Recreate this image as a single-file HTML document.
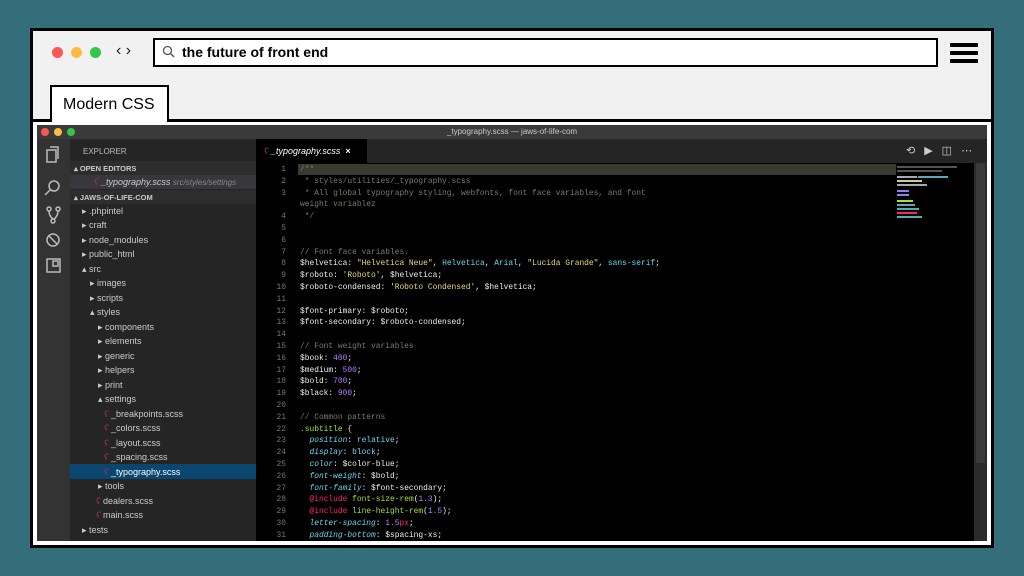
<!DOCTYPE html>
<html><head><style>
*{margin:0;padding:0;box-sizing:border-box}
body{width:1024px;height:576px;background:#346e7b;position:relative;overflow:hidden;font-family:"Liberation Sans",sans-serif}
.frame{position:absolute;left:30px;top:28px;width:964px;height:520px;background:#fff;border:3px solid #000}
.hdr{position:absolute;left:0;top:0;width:958px;height:91px;background:#f1f1f1;border-bottom:3px solid #000}
.dot{position:absolute;top:16px;width:11px;height:11px;border-radius:50%}
.url{position:absolute;left:120px;top:7px;width:785px;height:29px;border:2.5px solid #000;background:#fff;font-weight:bold;font-size:14px;line-height:24px;padding-left:27px}
.tab{position:absolute;left:17px;top:54px;width:119px;height:37px;border:2.5px solid #000;border-bottom:none;background:#fff;font-size:16px;padding:9px 0 0 11px}
.burger{position:absolute;left:917px;top:12px;width:28px;height:20px}
.burger i{display:block;height:3.5px;background:#000;margin-bottom:4.5px}
.vs{position:absolute;left:4px;top:94px;width:950px;height:416px;background:#000;overflow:hidden}
.title{position:absolute;left:0;top:0;width:950px;height:14px;background:#3a3a3a;color:#ccc;font-size:8px;text-align:center;line-height:14px}
.act{position:absolute;left:0;top:14px;width:33px;height:402px;background:#333}
.side{position:absolute;left:33px;top:14px;width:186px;height:402px;background:#252526;color:#ccc;font-size:9px}
.side div{position:absolute;white-space:nowrap}
.tb{position:absolute;left:219px;top:14px;width:731px;height:24px;background:#252526}
.ed{position:absolute;left:219px;top:38px;width:731px;height:378px;background:#000}
.code{position:absolute;left:0;top:0;font-family:"Liberation Mono",monospace;font-size:7.9px;line-height:11.8px;color:#eee;white-space:pre}
.ln{position:absolute;left:0;width:30px;text-align:right;color:#777}
.c{color:#7a7a6a}.y{color:#e6db74}.b{color:#66d9ef}.p{color:#ae81ff}.g{color:#a6e22e}.r{color:#f92672}.i{color:#66d9ef;font-style:italic}
.s{color:#b0304f;font-style:italic}
.mm{position:absolute;height:2px}
</style></head><body>
<div class="frame">
 <div class="hdr">
  <div class="dot" style="left:19px;background:#fc5753"></div>
  <div class="dot" style="left:38px;background:#fdbc40"></div>
  <div class="dot" style="left:57px;background:#33c748"></div>
  <div style="position:absolute;left:83px;top:11px;font-size:16px;color:#222">‹ ›</div>
  <div class="url"><svg style="position:absolute;left:7px;top:5px" width="13" height="13"><circle cx="5.5" cy="5.5" r="4" fill="none" stroke="#555" stroke-width="1.3"/><line x1="8.5" y1="8.5" x2="12" y2="12" stroke="#555" stroke-width="1.5"/></svg>the future of front end</div>
  <div class="burger"><i></i><i></i><i></i></div>
  <div class="tab">Modern CSS</div>
 </div>
 <div class="vs">
  <div class="title"><span style="position:absolute;left:4px;top:3px;width:8px;height:8px;border-radius:50%;background:#fc5753"></span><span style="position:absolute;left:17px;top:3px;width:8px;height:8px;border-radius:50%;background:#fdbc40"></span><span style="position:absolute;left:30px;top:3px;width:8px;height:8px;border-radius:50%;background:#33c748"></span>_typography.scss — jaws-of-life-com</div>
  <div class="act">
   <svg width="33" height="180" fill="none" stroke="#bbb" stroke-width="1.5">
    <rect x="10" y="11" width="9" height="12"/><path d="M13 8h8v12"/>
    <circle cx="17" cy="47" r="5"/><path d="M13 51l-5 5"/>
    <circle cx="12" cy="70" r="2"/><circle cx="21" cy="70" r="2"/><circle cx="16" cy="82" r="2"/><path d="M12 72q0 5 4 8M21 72q0 5-4 8"/>
    <circle cx="16" cy="101" r="6"/><path d="M12 97l8 8"/>
    <rect x="10" y="120" width="13" height="13"/><rect x="16" y="122" width="5" height="5"/>
   </svg>
  </div>
  <div class="side">
   <div style="left:13px;top:8px;font-size:8px;color:#bbb">EXPLORER</div>
   <div style="left:0;top:22px;width:186px;height:14px;background:#2d2d2d"></div>
   <div style="left:4px;top:25px;font-size:7.5px;font-weight:bold">▴ OPEN EDITORS</div>
   <div style="left:0;top:36px;width:186px;height:14px;background:#37373d"></div>
   <div style="left:24px;top:38px"><span class="s">ʕ</span> <i>_typography.scss</i> <span style="color:#888;font-size:8px"><i>src/styles/settings</i></span></div>
   <div style="left:0;top:51px;width:186px;height:14px;background:#2d2d2d"></div>
   <div style="left:4px;top:54px;font-size:7.5px;font-weight:bold">▴ JAWS-OF-LIFE-COM</div>
   <div style="left:12px;top:67px">▸ .phpintel</div>
   <div style="left:12px;top:81px">▸ craft</div>
   <div style="left:12px;top:96px">▸ node_modules</div>
   <div style="left:12px;top:110px">▸ public_html</div>
   <div style="left:12px;top:125px">▴ src</div>
   <div style="left:20px;top:139px">▸ images</div>
   <div style="left:20px;top:154px">▸ scripts</div>
   <div style="left:20px;top:168px">▴ styles</div>
   <div style="left:28px;top:183px">▸ components</div>
   <div style="left:28px;top:197px">▸ elements</div>
   <div style="left:28px;top:212px">▸ generic</div>
   <div style="left:28px;top:226px">▸ helpers</div>
   <div style="left:28px;top:241px">▸ print</div>
   <div style="left:28px;top:255px">▴ settings</div>
   <div style="left:34px;top:270px"><span class="s">ʕ</span> _breakpoints.scss</div>
   <div style="left:34px;top:284px"><span class="s">ʕ</span> _colors.scss</div>
   <div style="left:34px;top:299px"><span class="s">ʕ</span> _layout.scss</div>
   <div style="left:34px;top:313px"><span class="s">ʕ</span> _spacing.scss</div>
   <div style="left:0;top:325px;width:186px;height:15px;background:#094771"></div>
   <div style="left:34px;top:328px;color:#fff"><span class="s">ʕ</span> _typography.scss</div>
   <div style="left:28px;top:342px">▸ tools</div>
   <div style="left:26px;top:357px"><span class="s">ʕ</span> dealers.scss</div>
   <div style="left:26px;top:371px"><span class="s">ʕ</span> main.scss</div>
   <div style="left:12px;top:386px">▸ tests</div>
  </div>
  <div class="tb">
   <div style="position:absolute;left:0;top:0;width:111px;height:24px;background:#000;color:#fff;font-size:9px;padding:7px 0 0 8px"><span class="s">ʕ</span> <i>_typography.scss</i> &nbsp;<b>×</b></div>
   <div style="position:absolute;left:650px;top:5px;color:#ccc;font-size:11px;letter-spacing:9px">⟲▶◫⋯</div>
  </div>
  <div class="ed">
   <div style="position:absolute;left:42px;top:1px;width:598px;height:11px;background:#3b3a32"></div>
   <div style="position:absolute;left:640px;top:0;width:80px;height:378px;background:#000"></div>
   <div class="mm" style="left:641px;top:3px;width:60px;background:#555"></div>
   <div class="mm" style="left:641px;top:7px;width:45px;background:#555"></div>
   <div class="mm" style="left:641px;top:13px;width:20px;background:#aaa"></div>
   <div class="mm" style="left:662px;top:13px;width:30px;background:#5ab"></div>
   <div class="mm" style="left:641px;top:17px;width:25px;background:#cc9"></div>
   <div class="mm" style="left:641px;top:21px;width:30px;background:#aaa"></div>
   <div class="mm" style="left:641px;top:27px;width:12px;background:#97e"></div>
   <div class="mm" style="left:641px;top:31px;width:12px;background:#97e"></div>
   <div class="mm" style="left:641px;top:37px;width:16px;background:#a6e22e"></div>
   <div class="mm" style="left:641px;top:41px;width:18px;background:#5ab"></div>
   <div class="mm" style="left:641px;top:45px;width:22px;background:#5ab"></div>
   <div class="mm" style="left:641px;top:49px;width:20px;background:#f26"></div>
   <div class="mm" style="left:641px;top:53px;width:25px;background:#5ab"></div>
   <div style="position:absolute;left:718px;top:0;width:13px;height:378px;background:#2a2a2a"></div>
   <div style="position:absolute;left:720px;top:0;width:9px;height:300px;background:#3a3a3a"></div>
   <div class="code" style="top:1px">
<span class="ln" style="top:0">1</span><span class="ln" style="top:11.8px">2</span><span class="ln" style="top:23.6px">3</span><span class="ln" style="top:47.2px">4</span><span class="ln" style="top:59px">5</span><span class="ln" style="top:70.8px">6</span><span class="ln" style="top:82.6px">7</span><span class="ln" style="top:94.4px">8</span><span class="ln" style="top:106.2px">9</span><span class="ln" style="top:118px">10</span><span class="ln" style="top:129.8px">11</span><span class="ln" style="top:141.6px">12</span><span class="ln" style="top:153.4px">13</span><span class="ln" style="top:165.2px">14</span><span class="ln" style="top:177px">15</span><span class="ln" style="top:188.8px">16</span><span class="ln" style="top:200.6px">17</span><span class="ln" style="top:212.4px">18</span><span class="ln" style="top:224.2px">19</span><span class="ln" style="top:236px">20</span><span class="ln" style="top:247.8px">21</span><span class="ln" style="top:259.6px">22</span><span class="ln" style="top:271.4px">23</span><span class="ln" style="top:283.2px">24</span><span class="ln" style="top:295px">25</span><span class="ln" style="top:306.8px">26</span><span class="ln" style="top:318.6px">27</span><span class="ln" style="top:330.4px">28</span><span class="ln" style="top:342.2px">29</span><span class="ln" style="top:354px">30</span><span class="ln" style="top:365.8px">31</span>
<div style="position:absolute;left:44px;top:0"><span class="c">/**
 * styles/utilities/_typography.scss
 * All global typography styling, webfonts, font face variables, and font
weight variablez
 */


// Font face variables.</span>
$helvetica: <span class="y">"Helvetica Neue"</span>, <span class="b">Helvetica</span>, <span class="b">Arial</span>, <span class="y">"Lucida Grande"</span>, <span class="b">sans-serif</span>;
$roboto: <span class="y">'Roboto'</span>, $helvetica;
$roboto-condensed: <span class="y">'Roboto Condensed'</span>, $helvetica;

$font-primary: $roboto;
$font-secondary: $roboto-condensed;

<span class="c">// Font weight variables</span>
$book: <span class="p">400</span>;
$medium: <span class="p">500</span>;
$bold: <span class="p">700</span>;
$black: <span class="p">900</span>;

<span class="c">// Common patterns</span>
<span class="g">.subtitle</span> <span class="y">{</span>
  <span class="i">position</span>: <span class="b">relative</span>;
  <span class="i">display</span>: <span class="b">block</span>;
  <span class="i">color</span>: $color-blue;
  <span class="i">font-weight</span>: $bold;
  <span class="i">font-family</span>: $font-secondary;
  <span class="r">@include</span> <span class="g">font-size-rem</span>(<span class="p">1.3</span>);
  <span class="r">@include</span> <span class="g">line-height-rem</span>(<span class="p">1.5</span>);
  <span class="i">letter-spacing</span>: <span class="p">1.5</span><span class="r">px</span>;
  <span class="i">padding-bottom</span>: $spacing-xs;</div>
   </div>
  </div>
 </div>
</div>
</body></html>
